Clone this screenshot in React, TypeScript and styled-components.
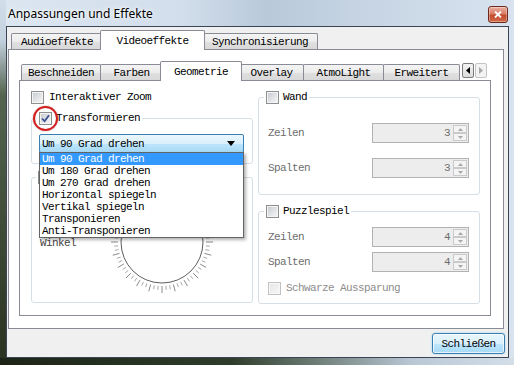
import React from 'react';
import styled, { createGlobalStyle } from 'styled-components';

const GlobalStyle = createGlobalStyle`
  html, body {
    margin: 0;
    padding: 0;
    background: #fff;
  }
  body {
    font-family: "Liberation Mono", "DejaVu Sans Mono", monospace;
    font-size: 11px;
    letter-spacing: -0.6px;
    color: #000;
  }
  * {
    box-sizing: border-box;
  }
`;

const tabBorder = '#898c95';

const Window = styled.div`
  width: 514px;
  height: 365px;
  display: flex;
  flex-direction: column;
  padding: 0 5px 7px 6px;
  background:
    linear-gradient(to right, #1c2418 0%, #2f3c2b 45%, #6f7f78 62%, #b9c7d5 80%, #d3dee9 100%) left bottom / 100% 7px no-repeat,
    linear-gradient(to bottom, #d2deea 0px, #c3d1df 40px, #55654f 95px, #27321f 100%) left top / 6px 100% no-repeat,
    linear-gradient(to right, #dbe6f1 0%, #d2deeb 35%, #b9c9da 52%, #c6d4e3 70%, #d8e3ef 100%);
`;

const TitleBar = styled.div`
  height: 26px;
  display: flex;
  align-items: flex-start;
  justify-content: space-between;
  padding: 6px 1px 0 2px;
`;

const Title = styled.span`
  font-family: "Noto Sans", "Open Sans", sans-serif;
  font-size: 12px;
  letter-spacing: 0;
  line-height: 16px;
  color: #000;
  text-shadow: 0 0 6px #fff, 0 0 3px #fff;
`;

const CloseButton = styled.div`
  width: 20px;
  height: 17px;
  border: 1px solid #6d2a1d;
  border-radius: 3px;
  background: linear-gradient(#eab0a2 0%, #d97c64 45%, #c24b2c 55%, #d06a4a 100%);
  box-shadow: inset 0 0 0 1px rgba(255, 255, 255, 0.35);
  display: flex;
  align-items: center;
  justify-content: center;
`;

const Client = styled.div`
  flex: 1;
  display: flex;
  flex-direction: column;
  border: 1px solid #3a4656;
  background: #f0f0f0;
`;

const TabBar = styled.div<{ $top: number; $height: number; $left: number }>`
  display: flex;
  align-items: flex-end;
  height: ${p => p.$height}px;
  margin-top: ${p => p.$top}px;
  padding: 0 4px 0 ${p => p.$left}px;
`;

const Tab = styled.div<{ $w: number; $active?: boolean }>`
  position: relative;
  flex: none;
  width: ${p => (p.$active ? p.$w + 4 : p.$w)}px;
  height: ${p => (p.$active ? 20 : 16)}px;
  margin: 0 ${p => (p.$active ? -3 : -1)}px ${p => (p.$active ? -1 : 0)}px ${p => (p.$active ? -2 : 0)}px;
  z-index: ${p => (p.$active ? 2 : 1)};
  border: 1px solid ${tabBorder};
  border-bottom: none;
  border-radius: 2px 2px 0 0;
  background: ${p =>
    p.$active
      ? '#fff'
      : 'linear-gradient(#f4f4f4 0%, #ececec 50%, #e0e0e0 51%, #d8d8d8 100%)'};
  display: flex;
  align-items: center;
  justify-content: center;
  white-space: nowrap;
  line-height: 14px;
`;

const OuterPane = styled.div`
  height: 280px;
  margin: 0 4px 0 1px;
  border: 1px solid ${tabBorder};
  background: #fff;
  padding: 0 12px 12px 10px;
  display: flex;
  flex-direction: column;
`;

const InnerPane = styled.div`
  flex: 1;
  border: 1px solid ${tabBorder};
  background: #fff;
  padding: 0 10px 0 11px;
  display: grid;
  grid-template-columns: 222px 222px;
  column-gap: 5px;
  align-items: start;
`;

const ScrollButtons = styled.div`
  margin-left: auto;
  margin-bottom: 2px;
  display: flex;
  gap: 1px;
`;

const ScrollButton = styled.div<{ $disabled?: boolean }>`
  width: 12px;
  height: 15px;
  border: 1px solid ${p => (p.$disabled ? '#c4c4c4' : '#7c7c7c')};
  border-radius: 2px;
  background: ${p =>
    p.$disabled ? '#f3f3f3' : 'linear-gradient(#f2f2f2, #dcdcdc)'};
  display: flex;
  align-items: center;
  justify-content: center;
`;

const Column = styled.div`
  display: flex;
  flex-direction: column;
`;

const CheckRow = styled.div<{ $top: number; $disabled?: boolean }>`
  display: flex;
  align-items: center;
  gap: 5px;
  height: 14px;
  margin-top: ${p => p.$top}px;
  color: ${p => (p.$disabled ? '#8d8d8d' : '#000')};
  white-space: nowrap;
`;

const GroupBox = styled.div<{ $top: number; $pad: string }>`
  position: relative;
  display: flex;
  flex-direction: column;
  margin-top: ${p => p.$top}px;
  padding: ${p => p.$pad};
  border: 1px solid #d5dfe5;
  border-radius: 3px;
  box-shadow: inset 1px 1px 0 #fff;
`;

const GroupTitle = styled.div`
  align-self: flex-start;
  display: flex;
  align-items: center;
  gap: 4px;
  height: 14px;
  margin: -8px 0 0 -4px;
  padding: 0 2px;
  background: #fff;
  white-space: nowrap;
`;

const CheckWrap = styled.span`
  position: relative;
  display: block;
  flex: none;
  width: 13px;
  height: 13px;
`;

const CheckBox = styled.span<{ $disabled?: boolean }>`
  display: flex;
  align-items: center;
  justify-content: center;
  width: 13px;
  height: 13px;
  border: 1px solid ${p => (p.$disabled ? '#c2c2c2' : '#8e8f8f')};
  background: ${p =>
    p.$disabled
      ? 'linear-gradient(135deg, #e6e6e6, #f7f7f7)'
      : 'linear-gradient(135deg, #c3c7cd 0%, #e2e4e7 55%, #f6f6f6 100%)'};
  box-shadow: inset 0 0 0 1px ${p => (p.$disabled ? '#f7f7f7' : '#f4f4f4')};
`;

const RedRing = styled.span`
  position: absolute;
  left: -6px;
  top: -6px;
  width: 25px;
  height: 25px;
  border: 2px solid #d11f1f;
  border-radius: 50%;
  box-shadow: 0 0 1px #7a1010;
  pointer-events: none;
`;

const ComboWrap = styled.div`
  position: relative;
  margin: 9px 0 0 -2px;
  width: 205px;
  z-index: 5;
`;

const Combo = styled.div`
  height: 19px;
  border: 1px solid #3c7fb1;
  border-radius: 2px;
  background: linear-gradient(#eaf6fd 0%, #d9f0fc 50%, #bee6fd 51%, #a7d9f5 100%);
  display: flex;
  align-items: center;
  justify-content: space-between;
  padding: 0 8px 0 2px;
  white-space: nowrap;
`;

const ComboList = styled.div`
  position: absolute;
  left: 0;
  top: 18px;
  width: 205px;
  border: 1px solid #646464;
  background: #fff;
  box-shadow: 2px 2px 3px rgba(0, 0, 0, 0.3);
`;

const ComboItem = styled.div<{ $selected?: boolean }>`
  height: 12px;
  line-height: 12px;
  padding-left: 2px;
  white-space: nowrap;
  background: ${p => (p.$selected ? '#3399ff' : 'transparent')};
  color: ${p => (p.$selected ? '#fff' : '#000')};
`;

const DialRow = styled.div`
  display: flex;
  align-items: center;
  margin-top: 3px;
`;

const DialLabel = styled.span`
  width: 36px;
  color: #444;
  margin-top: 2px;
`;

const DialSvg = styled.svg`
  margin-left: 31px;
  flex: none;
`;

const SpinRow = styled.div<{ $top: number }>`
  display: flex;
  align-items: center;
  justify-content: space-between;
  height: 20px;
  margin-top: ${p => p.$top}px;
  color: #6d6d6d;
`;

const Spin = styled.div`
  width: 97px;
  height: 20px;
  border: 1px solid #b2b2b2;
  background: #ededed;
  display: flex;
  padding: 1px;
`;

const SpinValue = styled.span`
  flex: 1;
  text-align: right;
  line-height: 16px;
  padding-right: 3px;
  color: #6d6d6d;
`;

const SpinButtons = styled.div`
  width: 14px;
  display: flex;
  flex-direction: column;
`;

const SpinButton = styled.div`
  flex: 1;
  border: 1px solid #cacaca;
  background: #f4f4f4;
  display: flex;
  align-items: center;
  justify-content: center;
`;

const ButtonRow = styled.div`
  display: flex;
  justify-content: flex-end;
  padding: 4px 3px 0 0;
`;

const PushButton = styled.div`
  width: 73px;
  height: 21px;
  border: 1px solid #3c7fb1;
  border-radius: 3px;
  background: linear-gradient(#eaf6fd 0%, #d9f0fc 50%, #bee6fd 51%, #a7d9f5 100%);
  box-shadow: inset 0 0 0 1px rgba(255, 255, 255, 0.7), 0 0 2px #8ccbf0;
  display: flex;
  align-items: center;
  justify-content: center;
`;

const Check: React.FC<{ checked?: boolean; disabled?: boolean; marked?: boolean }> = ({
  checked,
  disabled,
  marked,
}) => (
  <CheckWrap>
    <CheckBox $disabled={disabled}>
      {checked && (
        <svg width="9" height="9" viewBox="0 0 9 9">
          <path d="M1 4.5 L3.6 7.2 L8 1.3" fill="none" stroke="#3b4f8f" strokeWidth="1.8" />
        </svg>
      )}
    </CheckBox>
    {marked && <RedRing />}
  </CheckWrap>
);

const SpinBox: React.FC<{ value: number }> = ({ value }) => (
  <Spin>
    <SpinValue>{value}</SpinValue>
    <SpinButtons>
      <SpinButton>
        <svg width="5" height="3" viewBox="0 0 5 3">
          <path d="M0 3h5L2.5 0z" fill="#a8a8a8" />
        </svg>
      </SpinButton>
      <SpinButton>
        <svg width="5" height="3" viewBox="0 0 5 3">
          <path d="M0 0h5L2.5 3z" fill="#a8a8a8" />
        </svg>
      </SpinButton>
    </SpinButtons>
  </Spin>
);

const Dial: React.FC = () => {
  const c = 55;
  const ticks = Array.from({ length: 72 }, (_, i) => {
    const a = (i * 5 * Math.PI) / 180;
    const r1 = 44;
    const r2 = i % 3 === 0 ? 51 : 48;
    return (
      <line
        key={i}
        x1={c + r1 * Math.cos(a)}
        y1={c + r1 * Math.sin(a)}
        x2={c + r2 * Math.cos(a)}
        y2={c + r2 * Math.sin(a)}
        stroke={i % 3 === 0 ? '#8a8a8a' : '#a8a8a8'}
        strokeWidth="1"
      />
    );
  });
  return (
    <DialSvg width="110" height="110" viewBox="0 0 110 110">
      {ticks}
      <circle cx={c} cy={c} r="41" fill="#fff" stroke="#5e5e5e" strokeWidth="1" />
    </DialSvg>
  );
};

const transformOptions = [
  'Um 90 Grad drehen',
  'Um 180 Grad drehen',
  'Um 270 Grad drehen',
  'Horizontal spiegeln',
  'Vertikal spiegeln',
  'Transponieren',
  'Anti-Transponieren',
];

const outerTabs = [
  { label: 'Audioeffekte', w: 92 },
  { label: 'Videoeffekte', w: 101, active: true },
  { label: 'Synchronisierung', w: 116 },
];

const innerTabs = [
  { label: 'Beschneiden', w: 80 },
  { label: 'Farben', w: 63 },
  { label: 'Geometrie', w: 78, active: true },
  { label: 'Overlay', w: 65 },
  { label: 'AtmoLight', w: 81 },
  { label: 'Erweitert', w: 77 },
];

export default function App() {
  return (
    <>
      <GlobalStyle />
      <Window>
        <TitleBar>
          <Title>Anpassungen und Effekte</Title>
          <CloseButton>
            <svg width="8" height="7" viewBox="0 0 8 7">
              <path d="M1 0.5 L7 6.5 M7 0.5 L1 6.5" stroke="#fff" strokeWidth="1.8" />
            </svg>
          </CloseButton>
        </TitleBar>

        <Client>
          <TabBar $top={0} $height={22} $left={4}>
            {outerTabs.map(t => (
              <Tab key={t.label} $w={t.w} $active={t.active}>
                {t.label}
              </Tab>
            ))}
          </TabBar>

          <OuterPane>
            <TabBar $top={10} $height={20} $left={2}>
              {innerTabs.map(t => (
                <Tab key={t.label} $w={t.w} $active={t.active}>
                  {t.label}
                </Tab>
              ))}
              <ScrollButtons>
                <ScrollButton>
                  <svg width="4" height="7" viewBox="0 0 4 7">
                    <path d="M4 0v7L0 3.5z" fill="#000" />
                  </svg>
                </ScrollButton>
                <ScrollButton $disabled>
                  <svg width="4" height="7" viewBox="0 0 4 7">
                    <path d="M0 0v7L4 3.5z" fill="#a6a6a6" />
                  </svg>
                </ScrollButton>
              </ScrollButtons>
            </TabBar>

            <InnerPane>
              <Column>
                <CheckRow $top={9}>
                  <Check />
                  Interaktiver Zoom
                </CheckRow>

                <GroupBox $top={14} $pad="0 8px 10px 9px">
                  <GroupTitle>
                    <Check checked marked />
                    Transformieren
                  </GroupTitle>
                  <ComboWrap>
                    <Combo>
                      <span>{transformOptions[0]}</span>
                      <svg width="8" height="5" viewBox="0 0 8 5">
                        <path d="M0 0h8L4 5z" fill="#000" />
                      </svg>
                    </Combo>
                    <ComboList>
                      {transformOptions.map((o, i) => (
                        <ComboItem key={o} $selected={i === 0}>
                          {o}
                        </ComboItem>
                      ))}
                    </ComboList>
                  </ComboWrap>
                </GroupBox>

                <GroupBox $top={13} $pad="0 8px 5px 8px">
                  <GroupTitle>
                    <Check />
                  </GroupTitle>
                  <DialRow>
                    <DialLabel>Winkel</DialLabel>
                    <Dial />
                  </DialRow>
                </GroupBox>
              </Column>

              <Column>
                <GroupBox $top={16} $pad="0 10px 16px 9px">
                  <GroupTitle>
                    <Check />
                    Wand
                  </GroupTitle>
                  <SpinRow $top={19}>
                    <span>Zeilen</span>
                    <SpinBox value={3} />
                  </SpinRow>
                  <SpinRow $top={15}>
                    <span>Spalten</span>
                    <SpinBox value={3} />
                  </SpinRow>
                </GroupBox>

                <GroupBox $top={16} $pad="0 10px 8px 9px">
                  <GroupTitle>
                    <Check />
                    Puzzlespiel
                  </GroupTitle>
                  <SpinRow $top={9}>
                    <span>Zeilen</span>
                    <SpinBox value={4} />
                  </SpinRow>
                  <SpinRow $top={5}>
                    <span>Spalten</span>
                    <SpinBox value={4} />
                  </SpinRow>
                  <CheckRow $top={9} $disabled>
                    <Check disabled />
                    Schwarze Aussparung
                  </CheckRow>
                </GroupBox>
              </Column>
            </InnerPane>
          </OuterPane>

          <ButtonRow>
            <PushButton>Schließen</PushButton>
          </ButtonRow>
        </Client>
      </Window>
    </>
  );
}
